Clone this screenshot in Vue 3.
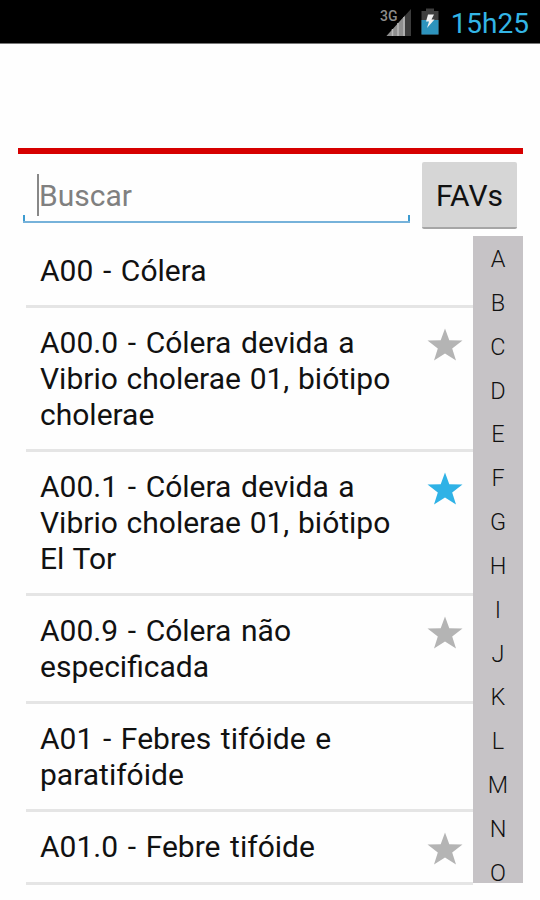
<template>
  <div class="screen">
    <header class="status-bar">
      <svg class="signal" viewBox="0 0 32 30" width="32" height="30">
        <text x="0" y="12.500" class="network">3G</text>
        <path d="M31 1V28H6.500Z" fill="#3c3c3c" />
        <path d="M25 7.500V28H6.500Z" fill="#8e8e8e" />
        <path d="M12.500 21V28M18 15V28M24 9V28" stroke="#b9b9b9" stroke-width="1.500" />
      </svg>
      <svg class="battery" viewBox="0 0 18 27" width="18" height="27">
        <path d="M0.500 3H5V0.500H13V3H17.500V26.500H0.500Z" fill="#3f3f3f" />
        <path d="M0.500 12H17.500V26.500H0.500Z" fill="#2d93bd" />
        <path d="M7 6.500H13L10.500 11.500H13.500L6 20L8 13.500H5Z" fill="#f2f2f2" />
      </svg>
      <span class="clock">15h25</span>
    </header>

    <div class="banner"></div>

    <div class="search-row">
      <div class="search-field">
        <input v-model="query" class="search-input" type="text" placeholder="Buscar" />
      </div>
      <button class="favs-btn" @click="onlyFavs = !onlyFavs">FAVs</button>
    </div>

    <main class="content">
      <ul class="disease-list">
        <li v-for="item in visibleItems" :key="item.code" class="disease-item">
          <span class="disease-name">{{ item.code }} - {{ item.name }}</span>
          <svg
            v-if="item.selectable"
            class="star"
            :class="{ active: item.fav }"
            viewBox="0 0 36 34"
            width="36"
            height="34"
            @click="item.fav = !item.fav"
          >
            <path d="M18 0.500L22.300 12.300L35.500 12.600L25.200 20.400L29 32.500L18 25.500L7 32.500L10.800 20.400L0.500 12.600L13.700 12.300Z" />
          </svg>
        </li>
      </ul>
      <nav class="alphabet">
        <span v-for="letter in letters" :key="letter" class="letter">{{ letter }}</span>
      </nav>
    </main>
  </div>
</template>

<script setup>
import { computed, ref } from 'vue'

const query = ref('')
const onlyFavs = ref(false)
const letters = 'ABCDEFGHIJKLMNO'.split('')

const items = ref([
  { code: 'A00', name: 'Cólera', selectable: false, fav: false },
  { code: 'A00.0', name: 'Cólera devida a Vibrio cholerae 01, biótipo cholerae', selectable: true, fav: false },
  { code: 'A00.1', name: 'Cólera devida a Vibrio cholerae 01, biótipo El Tor', selectable: true, fav: true },
  { code: 'A00.9', name: 'Cólera não especificada', selectable: true, fav: false },
  { code: 'A01', name: 'Febres tifóide e paratifóide', selectable: false, fav: false },
  { code: 'A01.0', name: 'Febre tifóide', selectable: true, fav: false }
])

const visibleItems = computed(() => {
  const q = query.value.toLowerCase()
  return items.value.filter(
    (item) => (!onlyFavs.value || item.fav) && `${item.code} - ${item.name}`.toLowerCase().includes(q)
  )
})
</script>

<style>
body {
  background: #fefefe;
}
</style>

<style scoped>
.screen {
  height: 900px;
  display: flex;
  flex-direction: column;
  overflow: hidden;
  background: #fefefe;
  color: #111;
  font-family: Roboto, sans-serif;
}

.status-bar {
  height: 44px;
  flex-shrink: 0;
  box-sizing: border-box;
  display: flex;
  align-items: flex-start;
  justify-content: flex-end;
  padding: 7px 11px 0 0;
  background: #000;
  border-bottom: 1px solid #777;
}

.network {
  font-size: 14px;
  font-weight: 500;
  fill: #8c8c8c;
}

.signal {
  margin-top: 1px;
}

.battery {
  margin: 1px 0 0 9px;
}

.clock {
  margin-left: 12px;
  font-size: 28px;
  line-height: 33px;
  color: #33b5e5;
}

.banner {
  height: 104px;
  flex-shrink: 0;
  margin: 0 17px 0 18px;
  border-bottom: 6px solid #d60000;
}

.search-row {
  height: 82px;
  flex-shrink: 0;
  box-sizing: border-box;
  display: flex;
  justify-content: space-between;
  padding: 8px 23px 0 23px;
}

.search-field {
  width: 387px;
  height: 61px;
  display: flex;
  flex-direction: column;
  justify-content: flex-end;
  box-sizing: border-box;
  border-bottom: 2px solid #76b2da;
  background:
    linear-gradient(#3d9bd0, #3d9bd0) left bottom / 2px 6px no-repeat,
    linear-gradient(#3d9bd0, #3d9bd0) right bottom / 2px 6px no-repeat;
}

.search-input {
  height: 42px;
  margin: 0 14px 5px;
  padding: 0;
  border: 0;
  border-left: 2px solid #888;
  outline: none;
  background: transparent;
  font-family: inherit;
  font-size: 30px;
  color: #111;
}

.search-input::placeholder {
  color: #808080;
  opacity: 1;
}

.favs-btn {
  width: 95px;
  height: 67px;
  padding: 2px 0 0;
  border: 0;
  border-bottom: 2px solid #a6a6a6;
  border-radius: 2px;
  background: #d6d6d6;
  font-family: inherit;
  font-size: 30px;
  color: #111;
  cursor: pointer;
}

.content {
  display: flex;
  align-items: flex-start;
  margin: 0 17px 0 26px;
}

.disease-list {
  flex: 1;
  margin: 0;
  padding: 0;
  list-style: none;
}

.disease-item {
  display: flex;
  align-items: flex-start;
  justify-content: space-between;
  padding: 17px 10px 16px 14px;
  border-bottom: 3px solid #e5e5e5;
}

.disease-name {
  width: 360px;
  font-size: 30px;
  line-height: 36px;
  word-spacing: 1.3px;
}

.disease-name::first-line {
  word-spacing: 2.2px;
}

.star {
  flex-shrink: 0;
  margin-top: 3px;
  fill: #b4b4b4;
  cursor: pointer;
}

.star.active {
  fill: #2fb2e6;
}

.alphabet {
  width: 50px;
  height: 647px;
  flex-shrink: 0;
  display: flex;
  flex-direction: column;
  background: #c6c3c6;
}

.letter {
  flex-shrink: 0;
  height: 43.85px;
  line-height: 46px;
  font-size: 23.5px;
  font-weight: 300;
  text-align: center;
  color: #111;
}

.letter:last-child {
  height: 33px;
}
</style>
